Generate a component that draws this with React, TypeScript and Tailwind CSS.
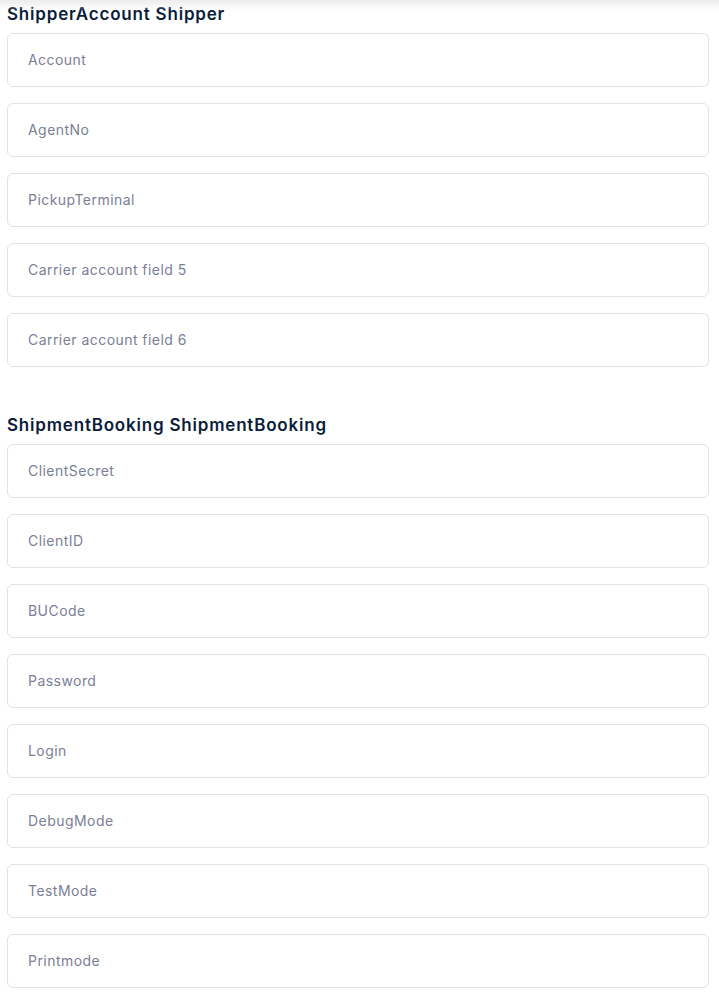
import React from "react";

const sections = [
  {
    title: "ShipperAccount Shipper",
    fields: ["Account", "AgentNo", "PickupTerminal", "Carrier account field 5", "Carrier account field 6"],
  },
  {
    title: "ShipmentBooking ShipmentBooking",
    fields: ["ClientSecret", "ClientID", "BUCode", "Password", "Login", "DebugMode", "TestMode", "Printmode"],
  },
];

export default function App() {
  return (
    <div className="relative min-h-[998px] bg-white px-[7px] pt-[2px] pr-[10px]" style={{ fontFamily: "Inter, 'Noto Sans', sans-serif" }}>
      <div className="pointer-events-none fixed inset-x-0 top-0 h-[10px] bg-gradient-to-b from-[#ececec] to-white/0" />
      <div className="flex flex-col gap-[46px]">
        {sections.map((s) => (
          <div key={s.title} className="flex flex-col">
            <h2 className="text-[17px] leading-[24px] font-semibold text-[#0b1d3a] tracking-[0.8px]">{s.title}</h2>
            <div className="mt-[7px] flex flex-col gap-[16px]">
              {s.fields.map((f) => (
                <input
                  key={f}
                  placeholder={f}
                  className="h-[54px] w-full rounded-[6px] border border-[#e2e2e2] bg-white px-[20px] pb-[2px] text-[14px] tracking-[0.45px] text-[#333] placeholder:text-[#7b8095] outline-none"
                />
              ))}
            </div>
          </div>
        ))}
      </div>
    </div>
  );
}
